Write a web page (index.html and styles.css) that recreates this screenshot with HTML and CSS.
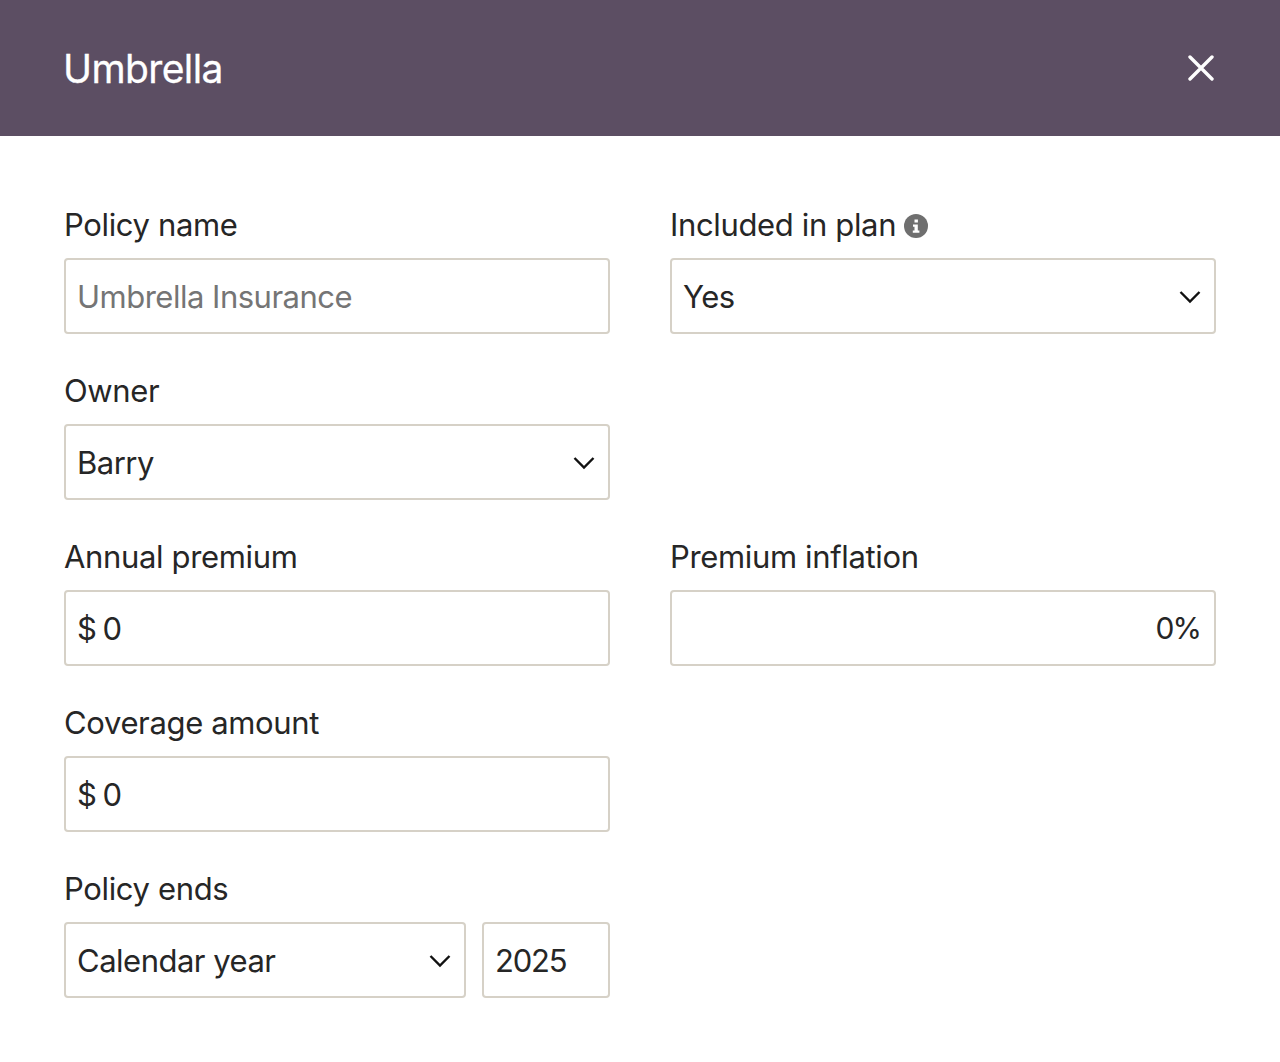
FILE: index.html
```html
<!DOCTYPE html>
<html lang="en">
<head>
<meta charset="utf-8">
<title>Umbrella</title>
<link rel="stylesheet" href="styles.css">
</head>
<body>
<header class="header">
  <h1 class="title">Umbrella</h1>
  <button class="close" type="button" aria-label="Close">
    <svg width="26" height="26" viewBox="0 0 26 26"><path d="M2 2L24 24M24 2L2 24" fill="none" stroke="#fff" stroke-width="3.4" stroke-linecap="round"/></svg>
  </button>
</header>
<main class="form">
  <div class="field">
    <label class="label">Policy name</label>
    <div class="box"><input class="control" type="text" placeholder="Umbrella Insurance"></div>
  </div>
  <div class="field">
    <label class="label">Included in plan
      <svg class="info" width="24" height="24" viewBox="0 0 24 24"><circle cx="12" cy="12" r="12" fill="#6f6f6f"/><rect x="10.5" y="5.5" width="3.4" height="3" fill="#fff"/><path d="M9 10.5h4.8v6h1.6v2.2H8.8v-2.2h1.7v-3.8H9z" fill="#fff"/></svg>
    </label>
    <div class="box select-box"><span class="value">Yes</span>
      <svg class="chevron" width="22" height="14" viewBox="0 0 22 14"><path d="M1.5 2L11 11.5L20.5 2" fill="none" stroke="#111" stroke-width="2.4"/></svg>
    </div>
  </div>
  <div class="field first">
    <label class="label">Owner</label>
    <div class="box select-box"><span class="value">Barry</span>
      <svg class="chevron" width="22" height="14" viewBox="0 0 22 14"><path d="M1.5 2L11 11.5L20.5 2" fill="none" stroke="#111" stroke-width="2.4"/></svg>
    </div>
  </div>
  <div class="field first">
    <label class="label">Annual premium</label>
    <div class="box"><span class="value money"><span class="currency">$</span><span class="digits">0</span></span></div>
  </div>
  <div class="field">
    <label class="label">Premium inflation</label>
    <div class="box end"><span class="value percent">0%</span></div>
  </div>
  <div class="field first">
    <label class="label">Coverage amount</label>
    <div class="box"><span class="value money"><span class="currency">$</span><span class="digits">0</span></span></div>
  </div>
  <div class="field first">
    <label class="label">Policy ends</label>
    <div class="pair">
      <div class="box select-box grow"><span class="value">Calendar year</span>
        <svg class="chevron" width="22" height="14" viewBox="0 0 22 14"><path d="M1.5 2L11 11.5L20.5 2" fill="none" stroke="#111" stroke-width="2.4"/></svg>
      </div>
      <div class="box year"><span class="value digits">2025</span></div>
    </div>
  </div>
</main>
</body>
</html>
```

FILE: styles.css
```css
* { box-sizing: border-box; }
html, body { margin: 0; padding: 0; background: #fff; }
body {
  font-family: Inter, "Noto Sans", sans-serif;
  color: #262626;
  height: 1062px;
  overflow: hidden;
}
.header {
  height: 136px;
  background: #5c4e63;
  padding: 0 64px;
  display: flex;
  align-items: center;
  justify-content: space-between;
}
.title {
  margin: 0 0 0 -1px;
  font-size: 39px;
  font-weight: 400;
  letter-spacing: -0.6px;
  color: #fff;
  -webkit-text-stroke: 0.3px #fff;
}
.close {
  background: none;
  border: 0;
  padding: 0;
  display: flex;
  margin-top: -1px;
  margin-right: 2px;
}
.form {
  padding: 64px 64px 0;
  display: grid;
  grid-template-columns: 546px 546px;
  column-gap: 60px;
  row-gap: 32px;
}
.first { grid-column: 1; }
.field { display: flex; flex-direction: column; gap: 10px; }
.label {
  font-size: 31px;
  line-height: 48px;
  letter-spacing: -0.35px;
  height: 48px;
  display: flex;
  align-items: center;
  gap: 8px;
  white-space: nowrap;
  padding-top: 2px;
}
.info { flex: none; margin-top: 2px; }
.box {
  height: 76px;
  border: 2px solid #d6d1c7;
  border-radius: 4px;
  padding: 0 11px;
  display: flex;
  align-items: center;
  background: #fff;
}
.select-box { justify-content: space-between; padding-right: 13px; }
.chevron { margin-top: 1px; }
.end { justify-content: flex-end; padding-right: 14px; }
.value, .control {
  font-family: inherit;
  font-size: 31px;
  letter-spacing: -0.5px;
  color: #262626;
}
.control {
  width: 100%;
  border: 0;
  outline: 0;
  padding: 0;
  background: transparent;
}
.control::placeholder { color: #757575; opacity: 1; }
.digits { letter-spacing: -1.2px; }
.percent { letter-spacing: -2px; font-size: 30px; }
.money { display: flex; gap: 6px; }
.pair { display: flex; gap: 16px; }
.grow { flex: 1; }
.year { width: 128px; flex: none; }
```
